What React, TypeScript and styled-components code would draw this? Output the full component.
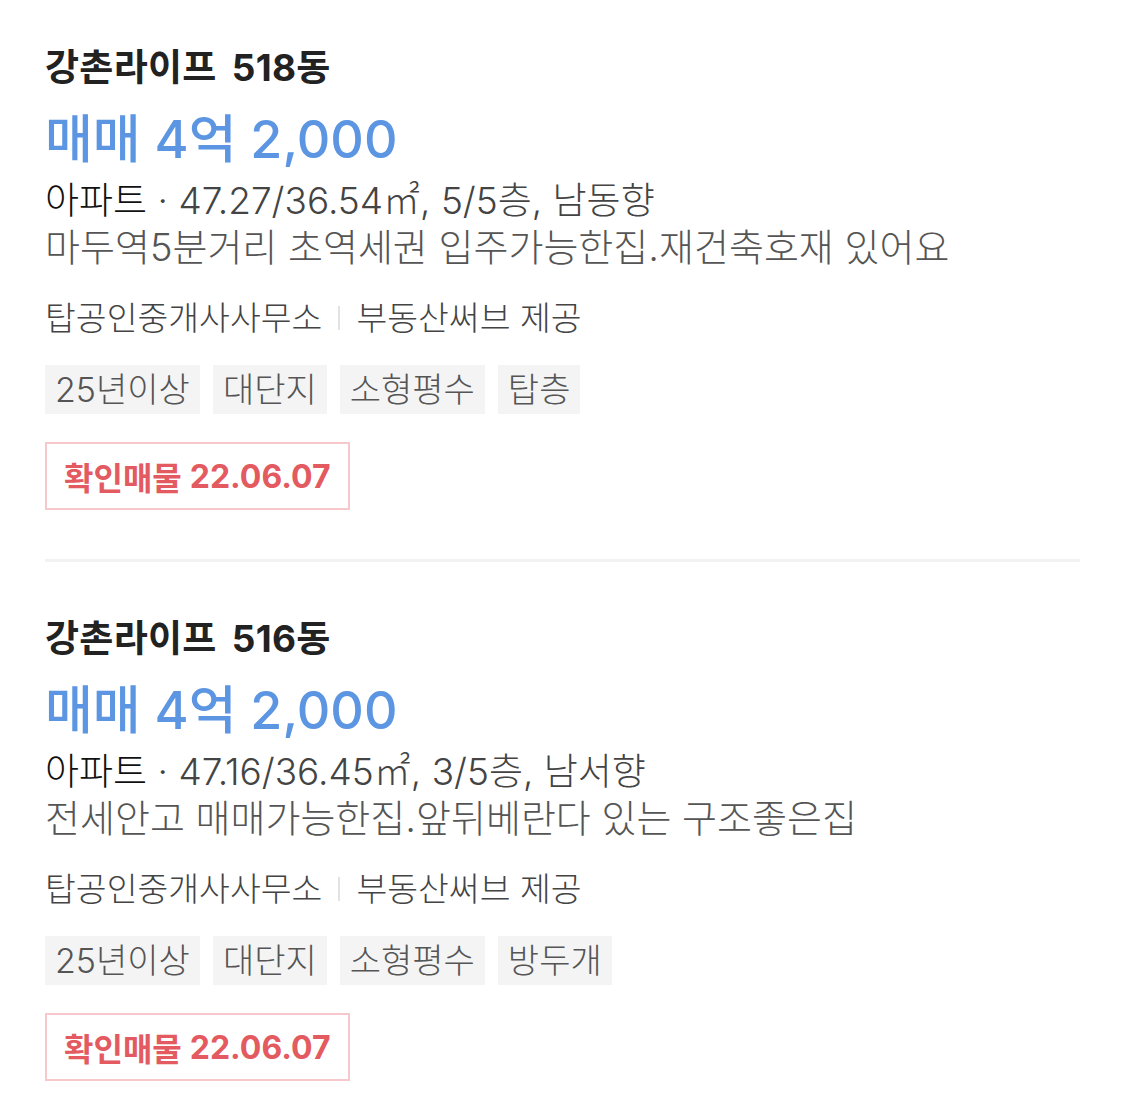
import styled, { createGlobalStyle } from 'styled-components'

const GlobalStyle = createGlobalStyle`
  body {
    margin: 0;
    background: #fff;
    font-family: Inter, 'Noto Sans CJK KR', 'Noto Sans', sans-serif;
  }
`

const StyledList = styled.div`
  padding: 0 45px;
`

const StyledItem = styled.div`
  padding: 55px 0 49px;
  border-bottom: 3px solid #f2f2f2;
  &:first-child {
    padding-top: 46px;
  }
  &:last-child {
    border-bottom: none;
  }
`

const StyledTitle = styled.h3`
  margin: 0;
  font-size: 37px;
  line-height: 44px;
  font-weight: 700;
  word-spacing: 6px;
  letter-spacing: 0.3px;
  color: #222;
`

const StyledPrice = styled.div`
  margin-top: 20px;
  font-size: 52px;
  line-height: 60px;
  font-weight: 500;
  color: #5c95e2;
`

const StyledSpec = styled.div`
  margin-top: 8px;
  font-size: 37px;
  line-height: 46px;
  font-weight: 300;
  color: #444;
`

const StyledType = styled.span`
  color: #111;
`

const StyledDesc = styled.div`
  font-size: 38px;
  line-height: 46px;
  font-weight: 300;
  color: #555;
`

const StyledAgency = styled.div`
  margin-top: 26px;
  display: flex;
  align-items: center;
  font-size: 33.5px;
  line-height: 44px;
  font-weight: 300;
  color: #444;
`

const StyledBar = styled.span`
  display: inline-block;
  width: 2px;
  height: 24px;
  background: #e2e2e2;
  margin: 0 16px;
`

const StyledTags = styled.div`
  margin-top: 25px;
  display: flex;
  gap: 13px;
`

const StyledTag = styled.span`
  display: inline-block;
  padding: 0 10px;
  height: 49px;
  line-height: 49px;
  font-size: 34px;
  font-weight: 300;
  color: #555;
  background: #f4f4f4;
`

const StyledBadge = styled.div`
  margin-top: 28px;
  display: inline-flex;
  align-items: center;
  height: 68px;
  box-sizing: border-box;
  padding: 0 17px;
  border: 2px solid #f6c8cc;
  font-size: 32px;
  font-weight: 700;
  color: #e35a60;
`

const StyledBadgeDate = styled.span`
  margin-left: 8px;
`

type Listing = {
  name: string
  spec: string
  desc: string
  tags: string[]
}

const listings: Listing[] = [
  {
    name: '강촌라이프 518동',
    spec: '47.27/36.54㎡, 5/5층, 남동향',
    desc: '마두역5분거리 초역세권 입주가능한집.재건축호재 있어요',
    tags: ['25년이상', '대단지', '소형평수', '탑층'],
  },
  {
    name: '강촌라이프 516동',
    spec: '47.16/36.45㎡, 3/5층, 남서향',
    desc: '전세안고 매매가능한집.앞뒤베란다 있는 구조좋은집',
    tags: ['25년이상', '대단지', '소형평수', '방두개'],
  },
]

function ListingItem({ item }: { item: Listing }) {
  return (
    <StyledItem>
      <StyledTitle>{item.name}</StyledTitle>
      <StyledPrice>매매 4억 2,000</StyledPrice>
      <StyledSpec>
        <StyledType>아파트</StyledType> · {item.spec}
      </StyledSpec>
      <StyledDesc>{item.desc}</StyledDesc>
      <StyledAgency>
        탑공인중개사사무소
        <StyledBar />
        부동산써브 제공
      </StyledAgency>
      <StyledTags>
        {item.tags.map((t) => (
          <StyledTag key={t}>{t}</StyledTag>
        ))}
      </StyledTags>
      <StyledBadge>
        확인매물<StyledBadgeDate>22.06.07</StyledBadgeDate>
      </StyledBadge>
    </StyledItem>
  )
}

export default function App() {
  return (
    <>
      <GlobalStyle />
      <StyledList>
        {listings.map((l) => (
          <ListingItem key={l.name} item={l} />
        ))}
      </StyledList>
    </>
  )
}
